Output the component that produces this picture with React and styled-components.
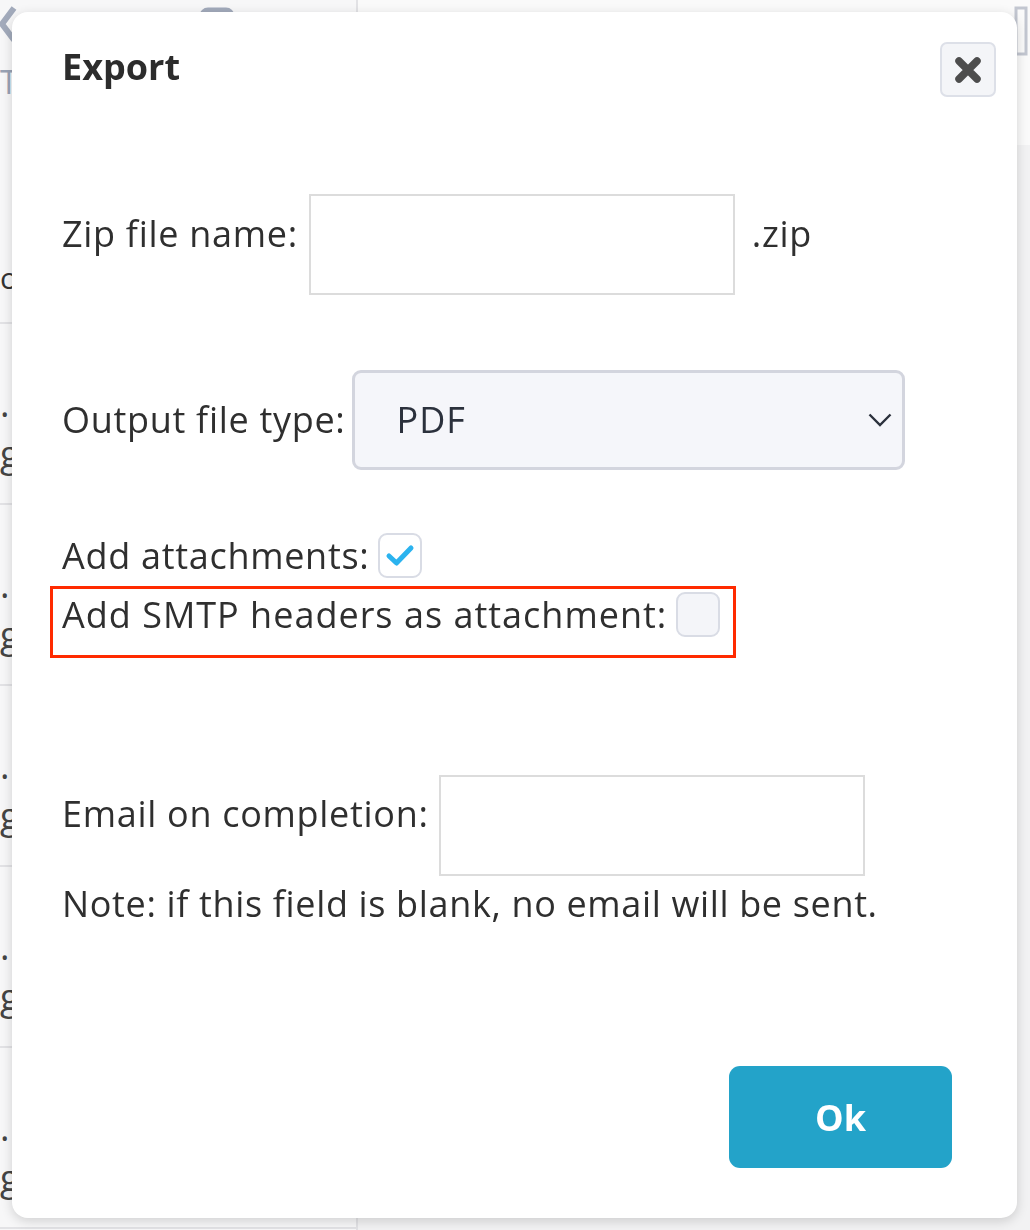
import React from "react";
import styled, { createGlobalStyle } from "styled-components";

const GlobalStyle = createGlobalStyle`
  html, body { margin: 0; padding: 0; }
  body {
    font-family: "Open Sans", "Liberation Sans", sans-serif;
    background: #f4f4f5;
    color: #2f2f2f;
  }
  * { box-sizing: border-box; }
`;

/* ---------- background page ---------- */
const Page = styled.div`
  display: flex;
  width: 1030px;
  height: 1230px;
  overflow: hidden;
  background: #f4f4f5;
`;

const Sidebar = styled.aside`
  width: 358px;
  flex: none;
  display: flex;
  flex-direction: column;
  background: #f7f7f8;
  border-right: 2px solid #e2e2e5;
`;

const SideToolbar = styled.div`
  height: 52px;
  display: flex;
  align-items: flex-start;
  gap: 160px;
  padding: 4px 0 0 0;
  color: #9aa3b5;
`;

const SideHeading = styled.div`
  height: 272px;
  padding: 12px 0 0 0;
  font-size: 32px;
  line-height: 36px;
  color: #9aa3b5;
  display: flex;
  flex-direction: column;
  gap: 160px;
  border-bottom: 2px solid #e2e2e5;
`;

const DarkText = styled.span`
  color: #333;
  font-size: 30px;
`;

const MailItem = styled.div`
  height: 181px;
  border-bottom: 2px solid #e2e2e5;
  padding: 58px 0 0 0;
  display: flex;
  flex-direction: column;
  gap: 6px;
  font-size: 36px;
  line-height: 44px;
  color: #444;
`;

const Main = styled.main`
  flex: 1;
  display: flex;
  flex-direction: column;
  background: #f2f2f3;
`;

const MainToolbar = styled.div`
  height: 145px;
  background: #fafafa;
  display: flex;
  justify-content: flex-end;
  padding: 4px 2px 0 0;
`;

const MainHeading = styled.div`
  padding: 62px 0 0 0;
  text-align: right;
  font-size: 34px;
  font-weight: 700;
  color: #2a2a2a;
  margin-right: -20px;
`;

/* ---------- modal ---------- */
const Overlay = styled.div`
  position: fixed;
  inset: 0;
  display: flex;
  padding: 12px 13px 12px 12px;
`;

const Modal = styled.div`
  flex: 1;
  display: flex;
  flex-direction: column;
  background: #ffffff;
  border-radius: 16px;
  box-shadow: 0 3px 12px rgba(0, 0, 0, 0.16);
  padding: 30px 21px 50px 50px;
`;

const Header = styled.div`
  display: flex;
  justify-content: space-between;
  align-items: flex-start;
`;

const Title = styled.h2`
  margin: 7px 0 0 0;
  font-size: 36px;
  line-height: 36px;
  font-weight: 700;
  color: #2c2c2c;
`;

const CloseButton = styled.button`
  width: 56px;
  height: 55px;
  padding: 0;
  display: flex;
  align-items: center;
  justify-content: center;
  background: #f4f5f8;
  border: 2px solid #dde0e8;
  border-radius: 7px;
  cursor: pointer;
`;

const Row = styled.div`
  display: flex;
  align-items: ${(p) => p.$align || "flex-start"};
  margin-top: ${(p) => p.$mt}px;
`;

const Label = styled.label`
  font-size: 36px;
  line-height: 36px;
  letter-spacing: ${(p) => p.$ls ?? 0.7}px;
  color: #2f2f2f;
  white-space: nowrap;
  margin-top: ${(p) => p.$mt || 0}px;
  margin-right: ${(p) => p.$mr ?? 11}px;
`;

const TextInput = styled.input`
  width: 426px;
  height: 101px;
  border: 2px solid #dcdcdc;
  border-radius: 0;
  background: #fff;
  font-size: 34px;
  font-family: inherit;
  padding: 0 14px;
  outline: none;
`;

const Suffix = styled.span`
  font-size: 36px;
  line-height: 36px;
  letter-spacing: 0.7px;
  color: #2f2f2f;
  margin-left: 17px;
  margin-top: ${(p) => p.$mt}px;
`;

const SelectBox = styled.div`
  width: 553px;
  height: 100px;
  display: flex;
  align-items: center;
  justify-content: space-between;
  padding: 0 10px 0 42px;
  background: #f5f6fa;
  border: 3px solid #d3d5de;
  border-radius: 9px;
  font-size: 36px;
  line-height: 36px;
  letter-spacing: 1px;
  color: #2b313c;
`;

const CheckBox = styled.span`
  width: 44px;
  height: 45px;
  flex: none;
  display: flex;
  align-items: center;
  justify-content: center;
  border: 2px solid #d9dce5;
  border-radius: 9px;
  background: ${(p) => (p.$checked ? "#ffffff" : "#f4f5f9")};
`;

const Highlight = styled.div`
  align-self: flex-start;
  display: flex;
  align-items: center;
  margin: 8px 0 0 -12px;
  padding: 3px 13px 18px 9px;
  border: 3px solid #ff2a00;
`;

const Note = styled.p`
  margin: 10px 0 0 0;
  font-size: 36px;
  line-height: 36px;
  letter-spacing: 0.65px;
  color: #2f2f2f;
`;

const OkButton = styled.button`
  margin-top: auto;
  align-self: flex-end;
  margin-right: 44px;
  width: 223px;
  height: 102px;
  border: none;
  border-radius: 11px;
  background: #23a3c9;
  color: #ffffff;
  font-family: inherit;
  font-size: 36px;
  font-weight: 700;
  cursor: pointer;
`;

const CloseIcon = () => (
  <svg width="30" height="30" viewBox="0 0 30 30">
    <path
      d="M6 6 L24 24 M24 6 L6 24"
      stroke="#4d4d4d"
      strokeWidth="7.5"
      strokeLinecap="round"
    />
  </svg>
);

const Chevron = () => (
  <svg width="24" height="14" viewBox="0 0 24 14">
    <path d="M1.5 1.5 L12 12 L22.5 1.5" fill="none" stroke="#2b313c" strokeWidth="2.4" />
  </svg>
);

const Check = () => (
  <svg width="30" height="24" viewBox="0 0 30 24">
    <path
      d="M4 12 L11.5 19 L26 4"
      fill="none"
      stroke="#2bb3ef"
      strokeWidth="5"
      strokeLinecap="round"
      strokeLinejoin="round"
    />
  </svg>
);

const BackIcon = () => (
  <svg width="40" height="40" viewBox="0 0 40 40">
    <path d="M14 4 L2 20 L14 36" fill="none" stroke="#a2aabb" strokeWidth="6" />
  </svg>
);

export default function App() {
  return (
    <>
      <GlobalStyle />
      <Page>
        <Sidebar>
          <SideToolbar>
            <BackIcon />
            <svg width="40" height="20" viewBox="0 0 40 20">
              <rect x="2" y="6" width="30" height="14" rx="6" fill="none" stroke="#a2aabb" strokeWidth="5" />
            </svg>
          </SideToolbar>
          <SideHeading>
            <span>T</span>
            <DarkText>or</DarkText>
          </SideHeading>
          {[0, 1, 2, 3, 4].map((i) => (
            <MailItem key={i}>
              <span>.</span>
              <span>g</span>
            </MailItem>
          ))}
        </Sidebar>
        <Main>
          <MainToolbar>
            <svg width="14" height="60" viewBox="0 0 14 60">
              <path d="M2 4 H12 V50 H2 Z" fill="none" stroke="#c2c6d0" strokeWidth="3" />
            </svg>
          </MainToolbar>
          <MainHeading>s</MainHeading>
        </Main>
      </Page>
      <Overlay>
        <Modal>
          <Header>
            <Title>Export</Title>
            <CloseButton aria-label="Close">
              <CloseIcon />
            </CloseButton>
          </Header>

          <Row $mt={97}>
            <Label $mt={22}>Zip file name:</Label>
            <TextInput />
            <Suffix $mt={22}>.zip</Suffix>
          </Row>

          <Row $mt={75} $align="center">
            <Label $mr={6}>Output file type:</Label>
            <SelectBox>
              <span>PDF</span>
              <Chevron />
            </SelectBox>
          </Row>

          <Row $mt={63} $align="center">
            <Label $mr={9}>Add attachments:</Label>
            <CheckBox $checked>
              <Check />
            </CheckBox>
          </Row>

          <Highlight>
            <Label $mr={9} $ls={1}>Add SMTP headers as attachment:</Label>
            <CheckBox />
          </Highlight>

          <Row $mt={117}>
            <Label $mt={21} $mr={10}>Email on completion:</Label>
            <TextInput />
          </Row>

          <Note>Note: if this field is blank, no email will be sent.</Note>

          <OkButton>Ok</OkButton>
        </Modal>
      </Overlay>
    </>
  );
}
